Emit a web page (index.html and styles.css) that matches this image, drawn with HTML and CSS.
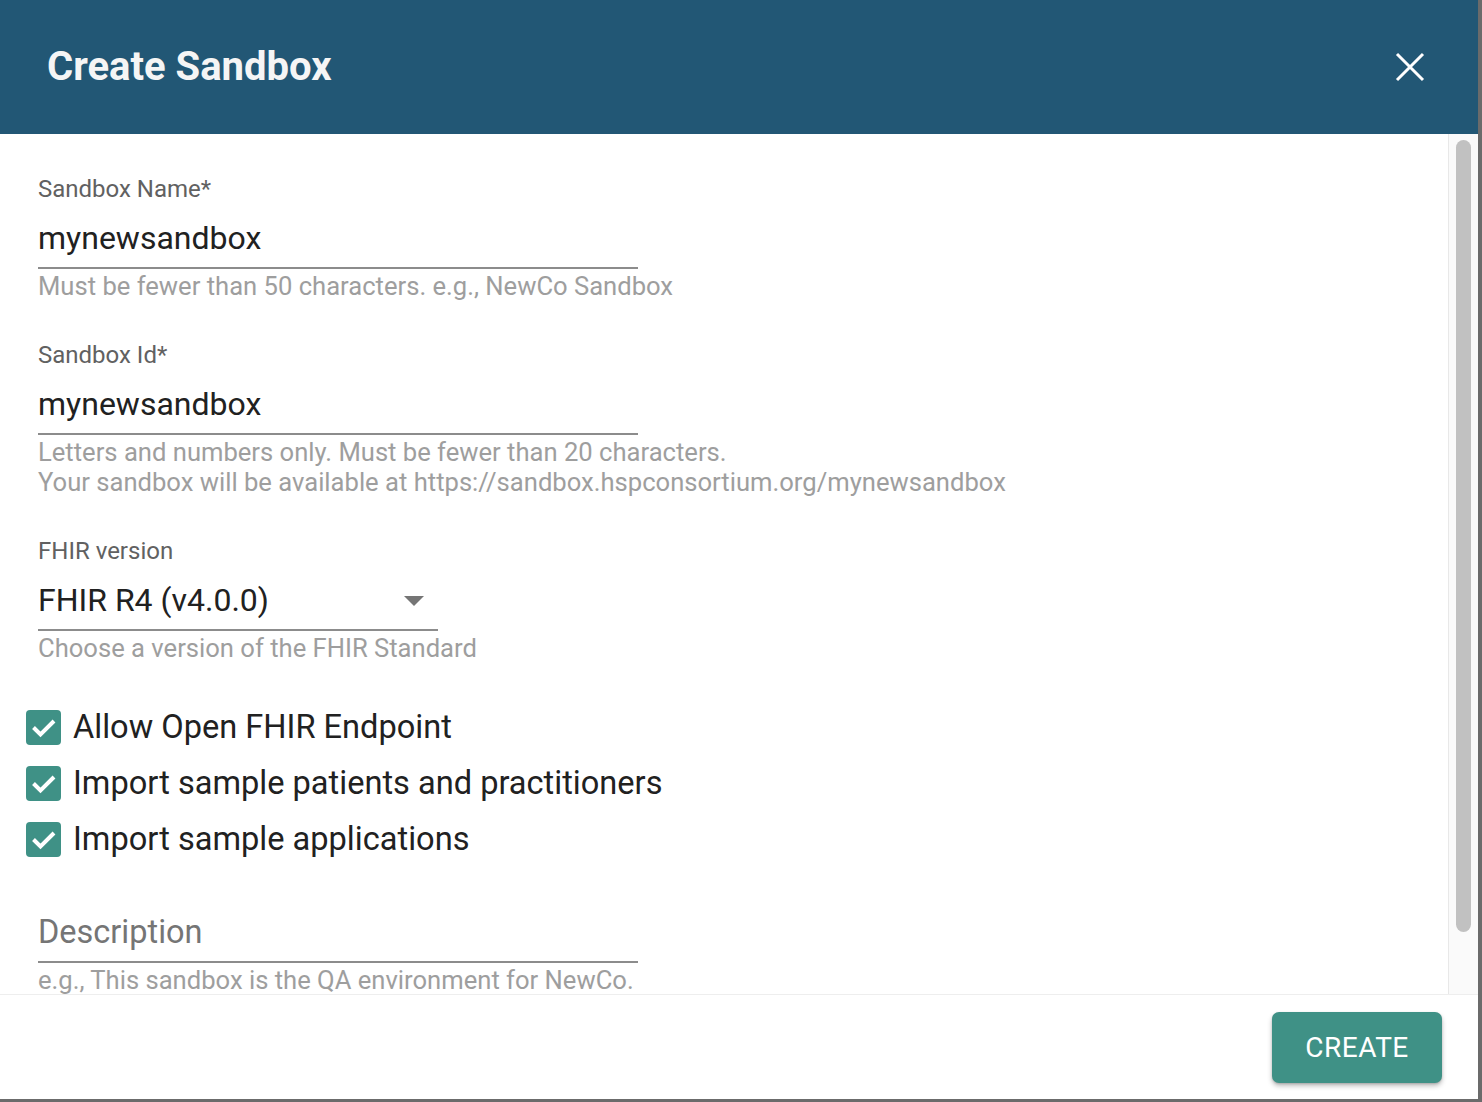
FILE: index.html
```html
<!DOCTYPE html>
<html lang="en">
<head>
<meta charset="utf-8">
<title>Create Sandbox</title>
<link rel="stylesheet" href="styles.css">
</head>
<body>
<div class="dialog">
  <header class="dlg-head">
    <h1 class="dlg-title">Create Sandbox</h1>
    <button class="close" aria-label="Close">
      <svg width="30" height="30" viewBox="0 0 30 30"><path d="M2 2 L28 28 M28 2 L2 28" stroke="#ffffff" stroke-width="3" fill="none"/></svg>
    </button>
  </header>
  <div class="dlg-body">
    <div class="content">
      <div class="field">
        <label class="lbl">Sandbox Name*</label>
        <input class="txt" type="text" value="mynewsandbox">
        <div class="helper">Must be fewer than 50 characters. e.g., NewCo Sandbox</div>
      </div>
      <div class="field">
        <label class="lbl">Sandbox Id*</label>
        <input class="txt" type="text" value="mynewsandbox">
        <div class="helper">Letters and numbers only. Must be fewer than 20 characters.<br>Your sandbox will be available at https://sandbox.hspconsortium.org/mynewsandbox</div>
      </div>
      <div class="field">
        <label class="lbl">FHIR version</label>
        <div class="select">
          <span>FHIR R4 (v4.0.0)</span>
          <svg class="arrow" width="20" height="10" viewBox="0 0 20 10"><path d="M0 0 L20 0 L10 10 Z" fill="#757575"/></svg>
        </div>
        <div class="helper">Choose a version of the FHIR Standard</div>
      </div>
      <div class="checks">
        <div class="check"><span class="box"><svg width="35" height="35" viewBox="0 0 35 35"><path d="M7.5 17.5 L14.5 24.5 L28 11" stroke="#fff" stroke-width="4" fill="none"/></svg></span><span class="check-lbl">Allow Open FHIR Endpoint</span></div>
        <div class="check"><span class="box"><svg width="35" height="35" viewBox="0 0 35 35"><path d="M7.5 17.5 L14.5 24.5 L28 11" stroke="#fff" stroke-width="4" fill="none"/></svg></span><span class="check-lbl">Import sample patients and practitioners</span></div>
        <div class="check"><span class="box"><svg width="35" height="35" viewBox="0 0 35 35"><path d="M7.5 17.5 L14.5 24.5 L28 11" stroke="#fff" stroke-width="4" fill="none"/></svg></span><span class="check-lbl">Import sample applications</span></div>
      </div>
      <div class="field desc">
        <input class="txt" type="text" placeholder="Description">
        <div class="helper">e.g., This sandbox is the QA environment for NewCo.</div>
      </div>
    </div>
    <div class="scrollbar"><div class="thumb"></div></div>
  </div>
  <footer class="dlg-foot">
    <button class="create">CREATE</button>
  </footer>
</div>
</body>
</html>
```

FILE: styles.css
```css
html, body {
  margin: 0;
  padding: 0;
}
body {
  width: 1482px;
  height: 1102px;
  overflow: hidden;
  background: #6b6b6b;
  font-family: Roboto, "Liberation Sans", sans-serif;
}
.dialog {
  width: 1478px;
  height: 1099px;
  background: #ffffff;
  display: flex;
  flex-direction: column;
}
.dlg-head {
  height: 134px;
  flex: none;
  background: #225775;
  display: flex;
  align-items: center;
  justify-content: space-between;
  padding: 0 53px 0 47px;
  box-sizing: border-box;
}
.dlg-title {
  margin: 0;
  font-size: 40px;
  font-weight: 700;
  color: #f5f5f5;
  line-height: 44px;
}
.close {
  background: none;
  border: none;
  padding: 0;
  width: 30px;
  height: 30px;
  display: flex;
}
.dlg-body {
  flex: 1;
  min-height: 0;
  display: flex;
  overflow: hidden;
}
.content {
  flex: 1;
  min-width: 0;
  padding: 43px 0 0 38px;
  overflow: hidden;
}
.scrollbar {
  flex: none;
  width: 22px;
  border-left: 1px solid #e8e8e8;
  background: #fafafa;
  padding: 6px 0 0 7px;
  margin-right: 0;
}
.thumb {
  width: 15px;
  height: 792px;
  border-radius: 8px;
  background: #c1c1c1;
}
.field + .field {
  margin-top: 42px;
}
.lbl {
  display: block;
  font-size: 24px;
  line-height: 24px;
  color: #616161;
}
.txt {
  display: block;
  width: 600px;
  margin: 17px 0 0 0;
  padding: 0 0 9px 0;
  box-sizing: content-box;
  height: 40px;
  border: none;
  border-bottom: 2px solid #8c8c8c;
  font-family: inherit;
  font-size: 32px;
  line-height: 40px;
  color: #212121;
  background: transparent;
  outline: none;
}
.txt::placeholder {
  color: #757575;
  opacity: 1;
  font-size: 32.5px;
}
.select {
  width: 400px;
  height: 40px;
  margin-top: 17px;
  padding-bottom: 9px;
  border-bottom: 2px solid #8c8c8c;
  display: flex;
  align-items: center;
  justify-content: space-between;
  font-size: 32px;
  line-height: 40px;
  color: #212121;
}
.arrow {
  margin-right: 14px;
  margin-top: 2px;
}
.helper {
  margin-top: 2px;
  font-size: 25.6px;
  line-height: 30px;
  color: #9e9e9e;
  white-space: nowrap;
}
.checks {
  margin-top: 36px;
  margin-left: -12px;
}
.check {
  height: 56px;
  display: flex;
  align-items: center;
  gap: 12px;
}
.box {
  width: 35px;
  height: 35px;
  border-radius: 4px;
  background: #3f9186;
  display: flex;
}
.check-lbl {
  font-size: 32.6px;
  color: #212121;
}
.desc {
  margin-top: 45px;
}
.desc .txt {
  margin-top: 0;
}
.dlg-foot {
  height: 105px;
  flex: none;
  box-sizing: border-box;
  border-top: 1px solid #eeeeee;
  display: flex;
  justify-content: flex-end;
  align-items: flex-start;
  padding: 17px 36px 0 0;
}
.create {
  width: 170px;
  height: 71px;
  background: #3f9186;
  color: #ffffff;
  border: none;
  border-radius: 7px;
  font-family: inherit;
  font-size: 28px;
  font-weight: 400;
  letter-spacing: 0.5px;
  box-shadow: 0 3px 5px rgba(0,0,0,0.25), 0 1px 2px rgba(0,0,0,0.15);
}
```
